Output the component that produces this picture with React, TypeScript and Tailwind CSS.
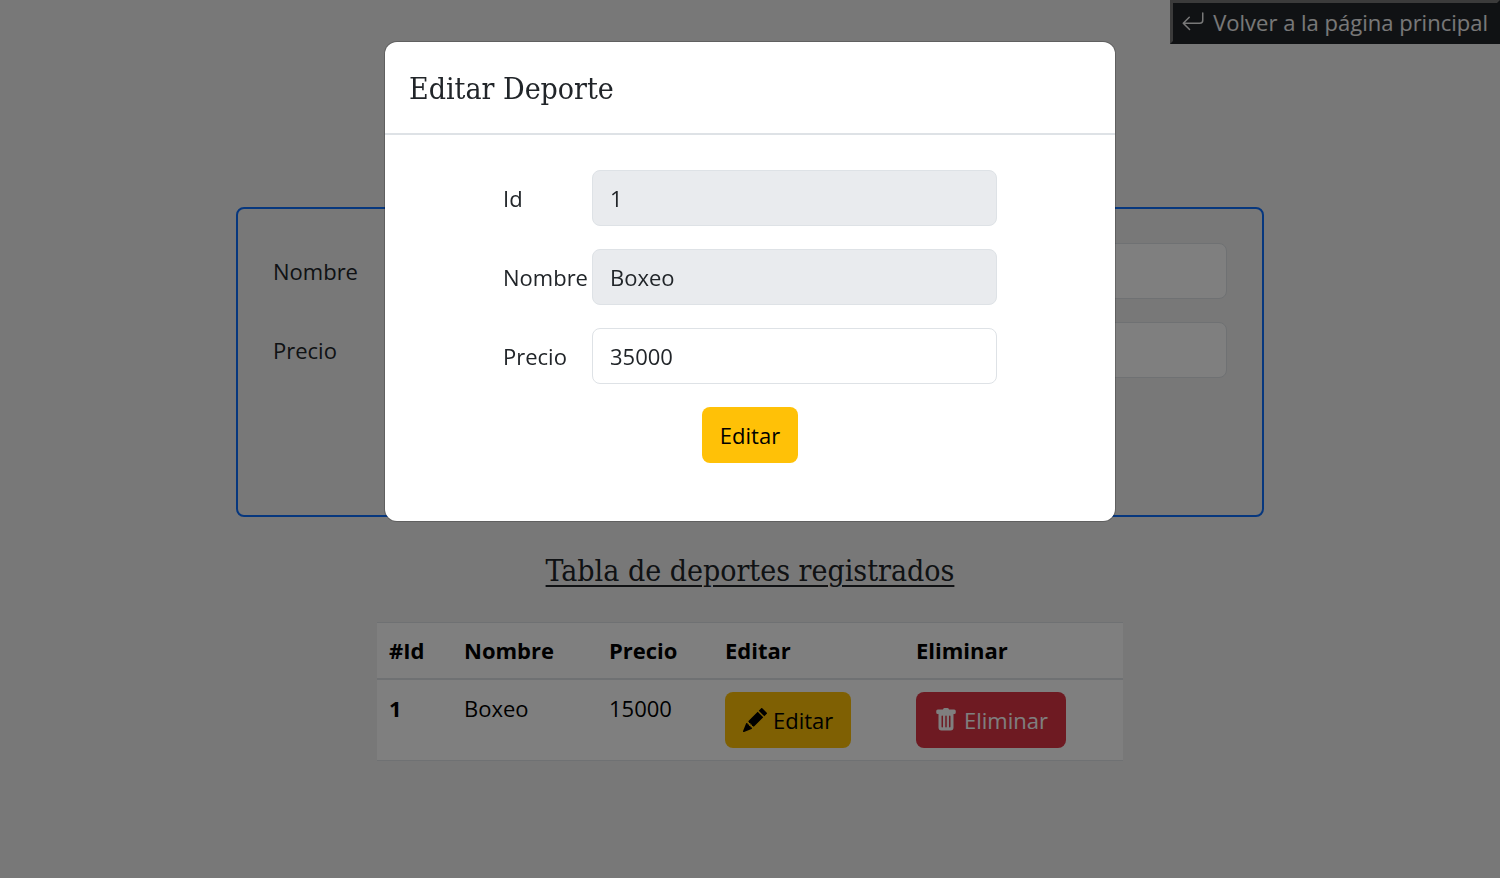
import { BsArrowReturnLeft, BsPencilFill, BsTrashFill } from "react-icons/bs";

const font = "font-['Open_Sans','Noto_Sans',sans-serif]";
const serif = "font-['DejaVu_Serif_Condensed','DejaVu_Serif',serif]";

type FieldProps = {
  id: string;
  label: string;
  value?: string;
  readOnly?: boolean;
  labelWidth: string;
};

function Field({ id, label, value = "", readOnly = false, labelWidth }: FieldProps) {
  return (
    <div className="flex items-center">
      <label htmlFor={id} className={`${labelWidth} shrink-0 whitespace-nowrap`}>
        {label}
      </label>
      <input
        id={id}
        defaultValue={value}
        readOnly={readOnly}
        className={`h-14 min-w-0 flex-1 rounded-lg border border-[#dee2e6] px-[17px] outline-none ${
          readOnly ? "bg-[#e9ebee]" : "bg-white"
        }`}
      />
    </div>
  );
}

function DeporteForm() {
  return (
    <form className="mx-auto flex min-h-[310px] w-full max-w-[1028px] flex-col gap-[23px] rounded-lg border-2 border-[#0d6efd] px-[35px] pt-[34px]">
      <Field id="nuevo-nombre" label="Nombre" labelWidth="w-48" />
      <Field id="nuevo-precio" label="Precio" labelWidth="w-48" />
    </form>
  );
}

function DeportesTable() {
  return (
    <table className="mx-auto mt-[30px] w-full max-w-[746px] table-fixed border-collapse bg-white text-left text-black">
      <colgroup>
        <col className="w-[75px]" />
        <col className="w-[145px]" />
        <col className="w-[116px]" />
        <col className="w-[191px]" />
        <col />
      </colgroup>
      <thead>
        <tr className="h-14 border-t border-b-2 border-[#dee2e6]">
          <th className="px-3 font-bold">#Id</th>
          <th className="px-3 font-bold">Nombre</th>
          <th className="px-3 font-bold">Precio</th>
          <th className="px-3 font-bold">Editar</th>
          <th className="px-3 font-bold">Eliminar</th>
        </tr>
      </thead>
      <tbody>
        <tr className="border-b border-[#dee2e6] align-top">
          <th scope="row" className="px-3 py-3 font-bold">1</th>
          <td className="px-3 py-3">Boxeo</td>
          <td className="px-3 py-3">15000</td>
          <td className="px-3 py-3">
            <button type="button" className="flex h-14 items-center gap-1.5 rounded-lg bg-[#ffc107] px-[18px] text-black">
              <BsPencilFill className="size-6" />
              Editar
            </button>
          </td>
          <td className="px-3 py-3">
            <button type="button" className="flex h-14 items-center gap-1.5 rounded-lg bg-[#dc3545] px-[18px] text-white">
              <BsTrashFill className="size-6" />
              Eliminar
            </button>
          </td>
        </tr>
      </tbody>
    </table>
  );
}

function EditModal() {
  return (
    <div className="fixed inset-0 flex items-start justify-center bg-black/50 pt-[42px]">
      <div
        role="dialog"
        aria-modal="true"
        aria-labelledby="editar-titulo"
        className="w-full max-w-[730px] rounded-xl bg-white pb-[58px] ring-1 ring-black/20"
      >
        <header className="border-b-2 border-[#dee2e6] px-6 pt-[25px] pb-[23px]">
          <h2 id="editar-titulo" className={`${serif} text-[30px] leading-[43px]`}>
            Editar Deporte
          </h2>
        </header>
        <form className="mx-auto flex max-w-[494px] flex-col gap-[23px] pt-[35px]">
          <Field id="id" label="Id" value="1" readOnly labelWidth="w-[89px]" />
          <Field id="nombre" label="Nombre" value="Boxeo" readOnly labelWidth="w-[89px]" />
          <Field id="precio" label="Precio" value="35000" labelWidth="w-[89px]" />
          <button type="button" className="h-14 self-center rounded-lg bg-[#ffc107] px-[18px] text-black">
            Editar
          </button>
        </form>
      </div>
    </div>
  );
}

export default function App() {
  return (
    <div className={`${font} min-h-screen bg-[#f0f0f0] text-[22px] leading-8 text-[#212529]`}>
      <div className="flex justify-end">
        <a
          href="#"
          className="flex h-11 items-center gap-2 border-[3px] border-t-[#767676] border-r-[#212529] border-b-[#212529] border-l-[#767676] bg-[#212529] pr-[9px] pl-2 text-[#f1f1f1]"
        >
          <BsArrowReturnLeft className="size-6" />
          Volver a la página principal
        </a>
      </div>
      <main className="pt-[163px]">
        <DeporteForm />
        <h1 className={`${serif} mt-8 text-center text-[30px] leading-[43px] underline decoration-2 underline-offset-4`}>
          Tabla de deportes registrados
        </h1>
        <DeportesTable />
      </main>
      <EditModal />
    </div>
  );
}
